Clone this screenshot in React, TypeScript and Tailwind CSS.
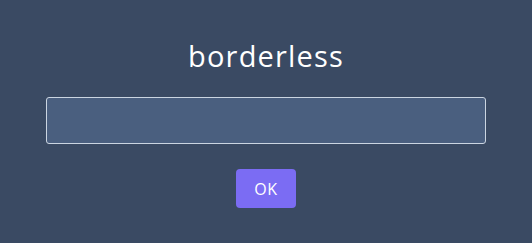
import React from 'react';

export default function App() {
  return (
    <div className="min-h-screen w-full bg-[#3a4a63] font-['Open_Sans',sans-serif]">
      <div className="flex flex-col items-center pt-[37px] pb-[35px]">
        <h1 className="text-[29px] leading-[37px] tracking-[0.04em] text-white">borderless</h1>
        <input
          type="text"
          className="mt-[23px] h-[47px] w-[440px] rounded-[3px] border border-[#cbd5e1] bg-[#4a5f7f] px-3 text-white outline-none"
        />
        <button
          type="button"
          className="mt-[25px] h-[39px] w-[60px] rounded-[4px] bg-[#7b6cf3] text-[16px] tracking-[0.04em] text-white"
        >
          OK
        </button>
      </div>
    </div>
  );
}
